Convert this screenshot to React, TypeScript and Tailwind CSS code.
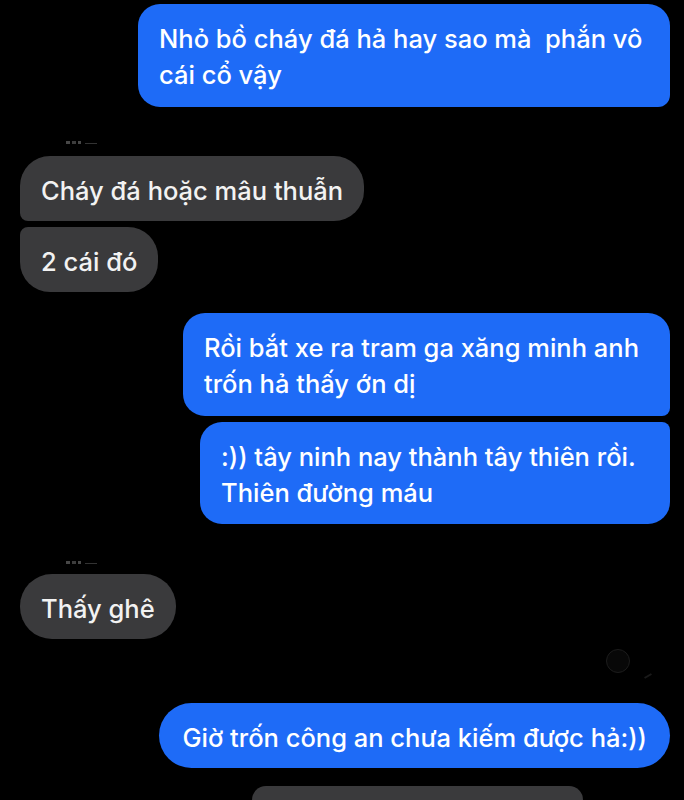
import React from 'react';

const font = { fontFamily: 'Inter, "Noto Sans", "Liberation Sans", sans-serif' };

interface BubbleProps {
  children: React.ReactNode;
  className?: string;
}

const Mine: React.FC<BubbleProps> = ({ children, className = '' }) => (
  <div className={`self-end bg-[#1e6bf7] text-white px-[21px] pt-[17px] ${className}`}>
    {children}
  </div>
);

const Theirs: React.FC<BubbleProps> = ({ children, className = '' }) => (
  <div className={`self-start bg-[#3a3a3c] text-[#f2f2f2] px-[21px] pt-[17px] pb-[12px] ${className}`}>
    {children}
  </div>
);

const Sender: React.FC = () => (
  <div className="ml-[46px] h-[12px] flex items-end gap-[2px] opacity-60">
    <span className="block w-[4px] h-[3px] bg-[#777]" />
    <span className="block w-[4px] h-[3px] bg-[#666]" />
    <span className="block w-[3px] h-[3px] bg-[#777]" />
    <span className="block w-[12px] h-[1px] bg-[#555] ml-[2px]" />
  </div>
);

export default function App() {
  return (
    <div
      className="w-[684px] h-[800px] bg-black overflow-hidden flex flex-col pl-[20px] pr-[14px] pt-[4px] text-[25.5px] leading-[36px] font-medium"
      style={font}
    >
      <Mine className="w-[532px] pb-[14px] rounded-[22px] rounded-br-[12px] whitespace-nowrap">
        Nhỏ bồ cháy đá hả hay sao mà&nbsp; phắn vô
        <br />
        cái cổ vậy
      </Mine>

      <div className="mt-[25px]">
        <Sender />
      </div>

      <Theirs className="mt-[12px] rounded-[30px] rounded-bl-[8px]">Cháy đá hoặc mâu thuẫn</Theirs>
      <Theirs className="mt-[6px] rounded-[30px] rounded-tl-[8px]">2 cái đó</Theirs>

      <Mine className="mt-[21px] w-[487px] pb-[14px] rounded-[22px] rounded-br-[8px] whitespace-nowrap">
        Rồi bắt xe ra tram ga xăng minh anh
        <br />
        trốn hả thấy ớn dị
      </Mine>
      <Mine className="mt-[6px] w-[470px] pb-[13px] rounded-[22px] rounded-tr-[8px] whitespace-nowrap">
        :)) tây ninh nay thành tây thiên rồi.
        <br />
        Thiên đường máu
      </Mine>

      <div className="mt-[28px]">
        <Sender />
      </div>

      <Theirs className="mt-[10px] rounded-[32px]">Thấy ghê</Theirs>

      <div className="self-end mt-[10px] mr-[18px] flex items-end gap-[14px] h-[34px]">
        <div className="w-[24px] h-[24px] rounded-full border border-[#1c1c1c] bg-[#080808] mb-[6px]" />
        <div className="w-[8px] h-[2px] bg-[#1a1a1a] rotate-[-30deg] mb-[2px]" />
      </div>

      <Mine className="mt-[24px] pb-[12px] rounded-[33px] whitespace-nowrap !px-[23px]">Giờ trốn công an chưa kiếm được hả:))</Mine>

      <div className="mt-[18px] ml-[232px] w-[331px] h-[40px] bg-[#3a3a3c] rounded-t-[30px]" />
    </div>
  );
}
